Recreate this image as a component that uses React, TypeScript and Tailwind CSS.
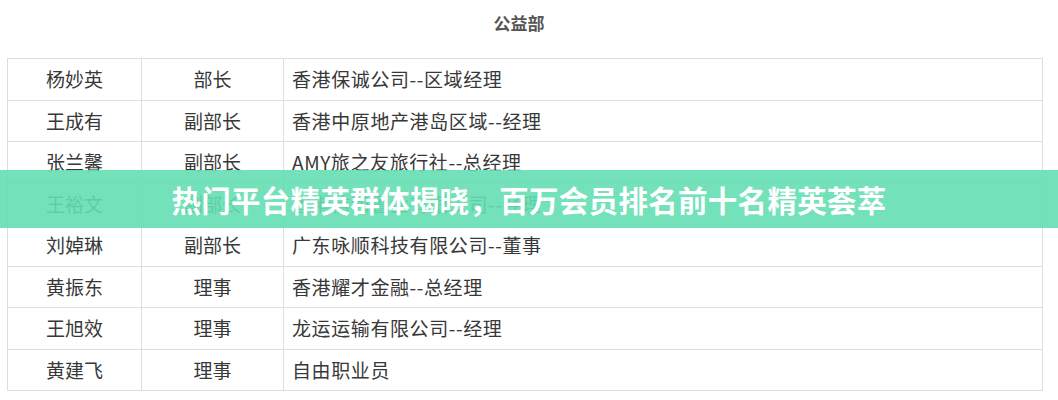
const members = [
  { name: "杨妙英", role: "部长", org: "香港保诚公司--区域经理" },
  { name: "王成有", role: "副部长", org: "香港中原地产港岛区域--经理" },
  { name: "张兰馨", role: "副部长", org: "AMY旅之友旅行社--总经理" },
  { name: "王裕文", role: "副部长", org: "香港信和置业有限公司--经理" },
  { name: "刘婥琳", role: "副部长", org: "广东咏顺科技有限公司--董事" },
  { name: "黄振东", role: "理事", org: "香港耀才金融--总经理" },
  { name: "王旭效", role: "理事", org: "龙运运输有限公司--经理" },
  { name: "黄建飞", role: "理事", org: "自由职业员" },
];

export default function App() {
  return (
    <div
      className="relative w-[1058px] h-[400px] overflow-hidden bg-white"
      style={{ fontFamily: '"Microsoft YaHei", "Noto Sans CJK SC", sans-serif' }}
    >
      <div className="pt-[10px] h-[58px] pr-[20px] text-center text-[17px] font-bold text-[#555555]">
        公益部
      </div>

      <div className="pl-[7px] w-[1043px]">
        <table className="w-full border-collapse text-[19px] text-[#383838]">
          <tbody>
            {members.map((m) => (
              <tr key={m.name} className="h-[41.5px]">
                <td className="w-[134px] border border-[#dedede] text-center align-middle">
                  {m.name}
                </td>
                <td className="w-[142px] border border-[#dedede] text-center align-middle">
                  {m.role}
                </td>
                <td className="border border-[#dedede] pl-[8px] align-middle tracking-[0.6px]">
                  {m.org}
                </td>
              </tr>
            ))}
          </tbody>
        </table>
      </div>

      <div className="absolute left-0 right-0 top-[170px] h-[58px] flex items-center justify-center bg-[#64deb1]/90">
        <span className="text-[29.5px] font-bold text-white tracking-[0.3px]">
          热门平台精英群体揭晓，百万会员排名前十名精英荟萃
        </span>
      </div>
    </div>
  );
}
